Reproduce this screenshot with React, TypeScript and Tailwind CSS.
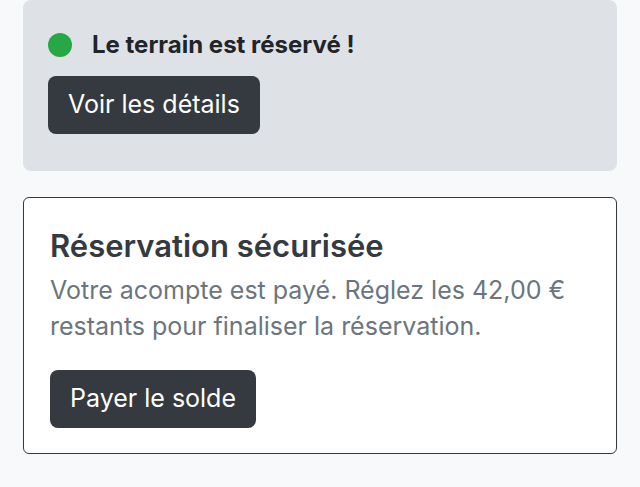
export default function App() {
  return (
    <div className="min-h-screen bg-[#f8f9fa] px-[23px] pb-8 font-['Inter',sans-serif]">
      <div className="flex flex-col gap-[26px]">
        <div className="rounded-[8px] bg-[#dee2e6] px-[25px] pt-[33px] pb-[37px]">
          <div className="flex items-center gap-[20px]">
            <span className="h-[24px] w-[24px] rounded-full bg-[#28a745]" />
            <span className="text-[24px] leading-[24px] font-bold text-[#212529]">Le terrain est réservé !</span>
          </div>
          <button className="mt-[19px] h-[58px] rounded-[8px] bg-[#343a40] px-[20px] text-[25px] text-white">
            Voir les détails
          </button>
        </div>

        <div className="rounded-[6px] border border-[#343a40] bg-white px-[26px] pt-[30px] pb-[25px]">
          <h2 className="text-[31px] leading-[36px] font-semibold text-[#343a40]">Réservation sécurisée</h2>
          <p className="mt-[8px] text-[25px] leading-[36px] text-[#6c757d]">
            Votre acompte est payé. Réglez les 42,00 € restants pour finaliser la réservation.
          </p>
          <button className="mt-[26px] h-[58px] rounded-[8px] bg-[#343a40] px-[20px] text-[25px] text-white">
            Payer le solde
          </button>
        </div>
      </div>
    </div>
  );
}
